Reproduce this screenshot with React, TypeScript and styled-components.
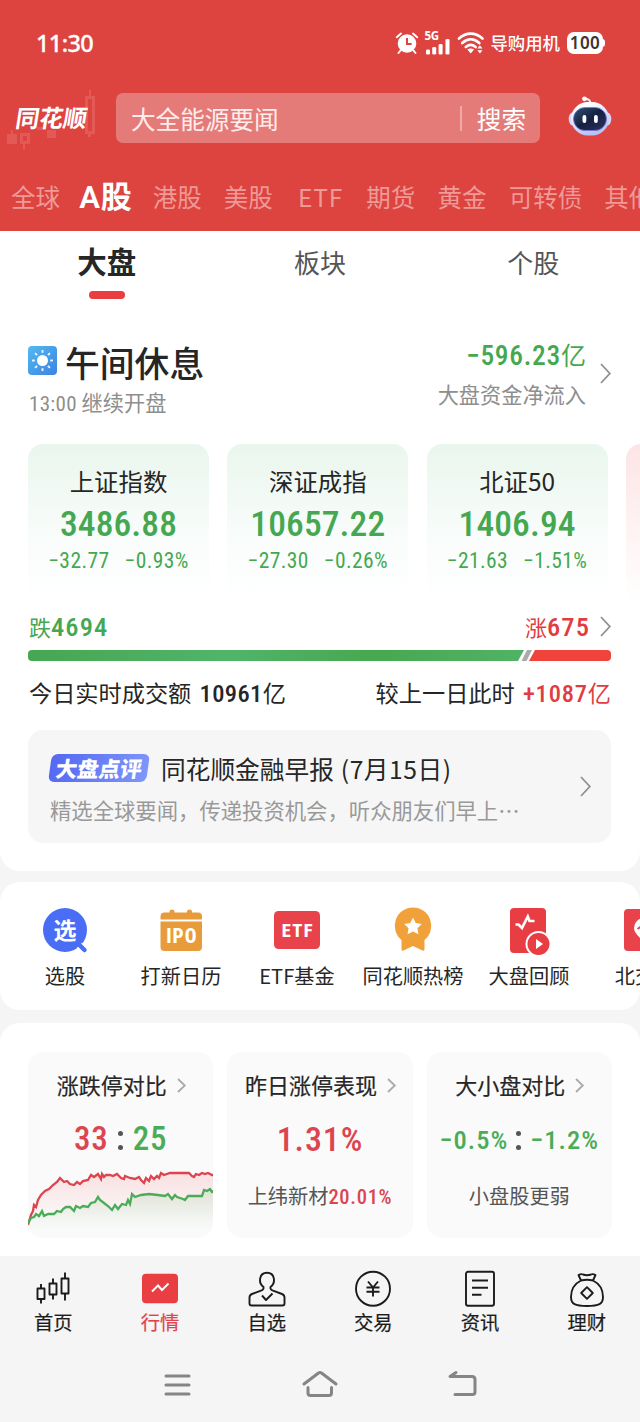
import React from "react";
import styled, { createGlobalStyle, css } from "styled-components";

const RED = "#e23c42";
const GREEN = "#45a851";
const INK = "#262626";

const GlobalStyle = createGlobalStyle`
  * { box-sizing: border-box; }
  body {
    margin: 0;
    background: #f5f5f5;
    font-family: "Noto Sans CJK SC", "Noto Sans", sans-serif;
    color: ${INK};
    overflow: hidden;
  }
  svg { display: block; flex: none; overflow: visible; }
`;

const Screen = styled.div`
  width: 640px;
  height: 1422px;
  overflow: hidden;
  display: flex;
  flex-direction: column;
  background: #f5f5f5;
  white-space: nowrap;
`;

const Num = styled.span<{ size: number; ls?: number; weight?: number; tone?: string; gap?: number }>`
  font-family: "Roboto Condensed", Roboto, "Noto Sans CJK SC", sans-serif;
  font-stretch: 75%;
  font-size: ${(p) => p.size}px;
  letter-spacing: ${(p) => p.ls ?? 0}px;
  font-weight: ${(p) => p.weight ?? 500};
  margin-left: ${(p) => p.gap ?? 0}px;
  ${(p) => p.tone && css`color: ${p.tone};`}
`;

const Header = styled.header`
  height: 231px;
  flex: none;
  background: #dd433f;
  color: #fff;
`;

const StatusBar = styled.div`
  height: 93px;
  padding: 0 37px 8px 36px;
  display: flex;
  align-items: center;
`;

const Clock = styled.div`
  flex: 1;
  font: 500 23.5px/30px "Noto Sans", sans-serif;
  letter-spacing: -0.6px;
  -webkit-text-stroke: 0.3px #fff;
`;

const StatusIcons = styled.div`
  display: flex;
  align-items: center;
`;

const Carrier = styled.span`
  font-size: 17.4px;
  line-height: 24px;
  margin: 0 7px 0 5px;
  font-weight: 500;
`;

const Battery = styled.div`
  width: 36px;
  height: 22px;
  border-radius: 7px;
  background: #fff;
  color: #44312f;
  font: 600 17px/22px "Noto Sans", sans-serif;
  letter-spacing: 0.4px;
  text-align: center;
  position: relative;
  &::after {
    content: "";
    position: absolute;
    right: -2px;
    top: 7px;
    width: 3px;
    height: 8px;
    border-radius: 0 3px 3px 0;
    background: #fff;
  }
`;

const SearchRow = styled.div`
  height: 50px;
  display: flex;
  align-items: center;
`;

const Logo = styled.div`
  width: 116px;
  height: 50px;
  padding-left: 16px;
  position: relative;
  svg { position: absolute; left: 4px; top: -3px; }
  span {
    position: relative;
    display: inline-block;
    font-size: 23.8px;
    font-weight: 700;
    line-height: 48px;
    transform: skewX(-9deg);
  }
`;

const SearchBox = styled.div`
  width: 424px;
  height: 50px;
  border-radius: 7px;
  background: #e57b79;
  display: flex;
  align-items: center;
  padding: 0 14px 0 15px;
  font-size: 24.6px;
  line-height: 48px;
`;

const Keyword = styled.span`
  flex: 1;
  color: #ffeceb;
`;

const Divider = styled.i`
  width: 2px;
  height: 25px;
  background: #f0a9a7;
  margin-right: 15px;
`;

const Robot = styled.svg`
  margin-left: 28px;
  margin-top: -3px;
`;

const MarketTabs = styled.nav`
  display: flex;
  align-items: center;
  height: 88px;
  padding: 20px 0 0 11px;
  gap: 22.2px;
  overflow: hidden;
`;

const MarketTab = styled.span<{ $active?: boolean; $latin?: boolean }>`
  flex: none;
  font-size: ${(p) => (p.$active ? 30.5 : 24.5)}px;
  font-weight: ${(p) => (p.$active ? 700 : 400)};
  color: ${(p) => (p.$active ? "#fff" : "#ee9a97")};
  line-height: 36px;
  ${(p) => p.$latin && css`letter-spacing: 0.8px; margin: 0 1px 0 3px;`}
  ${(p) => p.$active && css`
    font-family: Roboto, "Noto Sans CJK SC", sans-serif;
    font-weight: 600;
    font-size: 31px;
    letter-spacing: 0.8px;
    margin: 1px -2px 0 -3px;
  `}
`;

const Overview = styled.section`
  height: 640px;
  flex: none;
  background: #fff;
  border-radius: 0 0 20px 20px;
  padding: 0 29px 0 28px;
`;

const SubTabs = styled.nav`
  display: flex;
  height: 109px;
  margin: 0 -29px 0 -28px;
`;

const SubTab = styled.div<{ $active?: boolean }>`
  flex: 1;
  height: 68px;
  display: flex;
  flex-direction: column;
  align-items: center;
  padding-top: ${(p) => (p.$active ? 10 : 12)}px;
  font-size: ${(p) => (p.$active ? 29.5 : 26)}px;
  font-weight: ${(p) => (p.$active ? 700 : 400)};
  color: ${(p) => (p.$active ? INK : "#555")};
  line-height: 38px;
  &::after {
    content: "";
    width: 36px;
    height: 8px;
    margin-top: 12px;
    border-radius: 4px;
    background: ${(p) => (p.$active ? "#e93d40" : "transparent")};
  }
`;

const Session = styled.div`
  display: flex;
  align-items: center;
  height: 88px;
  margin: -11px 0 11px;
`;

const SessionState = styled.div`
  flex: 1;
  margin-top: 10px;
`;

const SessionTitle = styled.div`
  display: flex;
  align-items: center;
  gap: 8px;
  height: 49px;
  font-size: 34.8px;
  font-weight: 500;
  svg { margin-top: -4px; }
`;

const Muted = styled.div`
  font-size: 21.2px;
  line-height: 30px;
  height: 32px;
  color: #8e8e8e;
`;

const Flow = styled.div`
  text-align: right;
  margin-right: 14px;
`;

const FlowValue = styled.div`
  height: 43px;
  line-height: 36px;
  color: ${GREEN};
  font-size: 25px;
`;

const IndexRow = styled.div`
  display: flex;
  gap: 18.3px;
  height: 175px;
  padding-top: 16px;
  margin-right: -29px;
  overflow: hidden;
`;

const IndexCard = styled.article<{ $up?: boolean }>`
  flex: none;
  width: 181px;
  height: 159px;
  border-radius: 15px;
  background: linear-gradient(${(p) => (p.$up ? "#fde4e5, #fff" : "#e9f6ed, #f8fcfa 55%, #fff")});
  display: flex;
  flex-direction: column;
  align-items: center;
  padding-top: 20px;
`;

const IndexName = styled.div`
  font-size: 24.4px;
  line-height: 34px;
`;

const IndexValue = styled.div`
  height: 50px;
  line-height: 52px;
`;

const IndexDelta = styled.div`
  display: flex;
  gap: 15px;
  height: 26px;
  line-height: 26px;
`;

const Breadth = styled.div`
  display: flex;
  align-items: center;
  height: 47px;
  font-size: 22px;
  line-height: 32px;
`;

const Losers = styled.span`
  flex: 1;
  padding-left: 1px;
  color: ${GREEN};
`;

const Gainers = styled.span`
  color: ${RED};
  margin-right: 10px;
`;

const Turnover = styled.div`
  display: flex;
  justify-content: space-between;
  font-size: 23.2px;
  line-height: 36px;
  margin-top: 13px;
  padding-left: 1px;
  height: 56px;
`;

const NewsCard = styled.article`
  height: 113px;
  border-radius: 15px;
  background: #f6f6f6;
  display: flex;
  align-items: center;
  justify-content: space-between;
  padding: 0 20px 0 22px;
`;

const NewsTitle = styled.div`
  display: flex;
  align-items: center;
  gap: 13px;
  height: 40px;
  font-size: 24.7px;
  line-height: 36px;
  i { font-style: normal; margin-left: 7px; letter-spacing: 0.5px; }
`;

const Badge = styled.span`
  width: 98px;
  height: 28px;
  border-radius: 6px;
  background: linear-gradient(100deg, #5468f2, #7f96fa);
  transform: skewX(-8deg);
  color: #fff;
  font-size: 21.5px;
  font-weight: 900;
  line-height: 27px;
  text-align: center;
`;

const NewsText = styled.div`
  font-size: 21.35px;
  line-height: 32px;
  height: 38px;
  padding-top: 6px;
  color: #999;
`;

const Shortcuts = styled.section`
  margin-top: 11px;
  height: 128px;
  flex: none;
  background: #fff;
  border-radius: 20px;
  padding: 23px 0 0 7px;
  display: flex;
  overflow: hidden;
`;

const Shortcut = styled.div`
  flex: none;
  width: 116px;
  display: flex;
  flex-direction: column;
  align-items: center;
  font-size: 20.2px;
  line-height: 30px;
  svg { margin-bottom: 8px; }
`;

const Stats = styled.section`
  margin-top: 13px;
  height: 233px;
  flex: none;
  background: #fff;
  border-radius: 20px 20px 0 0;
  padding: 29px 28px 0;
  display: flex;
  gap: 14px;
`;

const Tile = styled.article`
  flex: 1;
  height: 186px;
  border-radius: 15px;
  background: #fafafa;
  display: flex;
  flex-direction: column;
  align-items: center;
  overflow: hidden;
`;

const TileTitle = styled.div`
  display: flex;
  align-items: center;
  gap: 10px;
  margin: 15px 0 0 1px;
  font-size: 22px;
  line-height: 34px;
  -webkit-text-stroke: 0.2px currentColor;
  svg { margin-top: 2px; }
`;

const TileValue = styled.div`
  display: flex;
  align-items: center;
  height: 40px;
  margin-top: 18px;
`;

const Colon = styled.i<{ $gap: number }>`
  width: 5px;
  height: 19px;
  margin: 3px ${(p) => p.$gap}px 0 ${(p) => p.$gap - 1}px;
  display: flex;
  flex-direction: column;
  justify-content: space-between;
  &::before, &::after {
    content: "";
    width: 5px;
    height: 5px;
    border-radius: 50%;
    background: #555;
  }
`;

const TileNote = styled.div`
  margin-top: 22px;
  font-size: 20.2px;
  line-height: 30px;
  color: #555;
`;

const TabBar = styled.nav`
  height: 90px;
  flex: none;
  display: flex;
  padding-top: 14px;
`;

const Tab = styled.div<{ $active?: boolean }>`
  flex: 1;
  display: flex;
  flex-direction: column;
  align-items: center;
  font-size: 19.3px;
  line-height: 28px;
  color: ${(p) => (p.$active ? "#e0444a" : "#1c1c1c")};
  -webkit-text-stroke: 0.2px currentColor;
`;

const SystemNav = styled.div`
  display: flex;
  justify-content: space-between;
  align-items: center;
  height: 76px;
  padding: 1px 163px 0;
`;

const Chevron = ({ w = 11, h = 21, color = "#909090" }) => (
  <svg width={w} height={h} viewBox={`0 0 ${w} ${h}`} fill="none" stroke={color} strokeWidth="1.8">
    <path d={`M1 1 L${w - 1.2} ${h / 2} L1 ${h - 1}`} />
  </svg>
);

const Alarm = () => (
  <svg width="24" height="24" viewBox="0 0 24 24">
    <circle cx="12" cy="12.5" r="9.3" fill="#fff" />
    <path d="M1.8 6.2 6 2.6M22.2 6.2 18 2.6M5.5 19.5 3.5 22M18.5 19.5 20.5 22" stroke="#fff" strokeWidth="2" strokeLinecap="round" />
    <path d="M12 7v6h4.6" fill="none" stroke="#dd433f" strokeWidth="2" />
  </svg>
);

const SignalWrap = styled.div`
  position: relative;
  width: 27px;
  height: 24px;
  margin: 0 6px 0 5px;
  span {
    position: absolute;
    left: 0;
    top: 0;
    font: 700 11.5px/10px "Noto Sans", sans-serif;
    letter-spacing: -0.2px;
  }
`;

const Signal = () => (
  <SignalWrap>
    <span>5G</span>
    <svg width="27" height="24" fill="#fff">
      <rect x="2" y="18.5" width="4" height="5" rx="1.3" />
      <rect x="8.2" y="16" width="4" height="7.5" rx="1.3" />
      <rect x="14.6" y="13" width="4" height="10.5" rx="1.3" />
      <rect x="21.5" y="8" width="4" height="15.5" rx="1.3" />
    </svg>
  </SignalWrap>
);

const Wifi = () => (
  <svg width="28" height="24" viewBox="0 0 28 24">
    <g fill="none" stroke="#fff" strokeWidth="2.7" strokeLinecap="round">
      <path d="M2 7.5C9 1 18.5 1 25.5 7.5" />
      <path d="M5.2 12C10.5 7 17 7 22.3 12" />
      <path d="M8.8 16C12 13.3 15.5 13.3 18.6 16" />
    </g>
    <path d="M10.3 18.5Q13.7 16.5 17.1 18.5L13.7 22.5Z" fill="#fff" />
    <path d="M20.3 17.6 22.9 14.2 25.5 17.6ZM20.3 19.2H25.5L22.9 22.6Z" fill="#fff" />
  </svg>
);

const LogoCandles = () => (
  <svg width="96" height="64" viewBox="0 0 96 64" fill="#e9706d" opacity="0.5">
    <path d="M3 44H7V40H9V44H13V54H3ZM33 37H42V40H33ZM43 40H52V48H43Z" />
    <path d="M16 43H26V54H21V60H19V54H16ZM19 46V51H23V46Z" fillRule="evenodd" />
    <path d="M81 6H91V44H87V47H84V44H81ZM84 9V41H88V9ZM85 0H87V6H85Z" fillRule="evenodd" />
  </svg>
);

const RobotHead = () => (
  <Robot width="44" height="42" viewBox="0 0 44 42">
    <defs>
      <linearGradient id="shell" x1="0" y1="0" x2="0.4" y2="1">
        <stop offset="0.2" stopColor="#fff" />
        <stop offset="1" stopColor="#b9c1fa" />
      </linearGradient>
      <linearGradient id="visor" x1="0" y1="0" x2="1" y2="1">
        <stop offset="0" stopColor="#315274" />
        <stop offset="0.5" stopColor="#142140" />
        <stop offset="1" stopColor="#303260" />
      </linearGradient>
    </defs>
    <path d="M17 3Q22.5 2.5 22.5 8" fill="none" stroke="#fbe9ef" strokeWidth="2" />
    <circle cx="16.5" cy="2.8" r="2.4" fill="#fff" />
    <ellipse cx="4.5" cy="23" rx="3.8" ry="6.5" fill="#d3d4fb" />
    <ellipse cx="39.5" cy="23" rx="3.8" ry="6.5" fill="#d3d4fb" />
    <rect x="3" y="6" width="38" height="33.5" rx="17" fill="url(#shell)" />
    <rect x="5.5" y="11.5" width="33" height="23" rx="11.5" fill="url(#visor)" stroke="#7777d8" strokeWidth="0.8" />
    <rect x="14.5" y="19" width="3.8" height="8" rx="1.9" fill="#fff" />
    <rect x="26" y="19" width="3.8" height="8" rx="1.9" fill="#fff" />
  </Robot>
);

const Sun = () => (
  <svg width="29" height="29" viewBox="0 0 29 29">
    <defs>
      <linearGradient id="sky" x1="0" y1="0" x2="1" y2="1">
        <stop offset="0" stopColor="#52baf0" />
        <stop offset="1" stopColor="#3c83e2" />
      </linearGradient>
    </defs>
    <rect width="29" height="29" rx="4" fill="url(#sky)" />
    <circle cx="14.5" cy="14.5" r="5.5" fill="#fff" />
    {[0, 45, 90, 135, 180, 225, 270, 315].map((a) => (
      <path key={a} d="M14.5 4V6.8" stroke="#e9f6ff" strokeWidth="1.9" transform={`rotate(${a} 14.5 14.5)`} />
    ))}
  </svg>
);

const BreadthBar = () => (
  <svg width="583" height="11" viewBox="0 0 583 11">
    <defs>
      <linearGradient id="fall">
        <stop offset="0" stopColor="#47a651" />
        <stop offset="0.4" stopColor="#50b46a" />
        <stop offset="0.7" stopColor="#48a850" />
        <stop offset="1" stopColor="#50b365" />
      </linearGradient>
    </defs>
    <path d="M4 0H496L490 11H4Q0 11 0 7V4Q0 0 4 0Z" fill="url(#fall)" />
    <path d="M499 0H504L498.5 11H493.5Z" fill="#aaa" />
    <path d="M507 0H579Q583 0 583 4V7Q583 11 579 11H501Z" fill="#ef433c" />
  </svg>
);

const glyphText = { fill: "#fff", textAnchor: "middle" as const };

const PickIcon = () => (
  <svg width="48" height="48" viewBox="0 0 48 48">
    <circle cx="24" cy="25" r="22" fill="#4a6df5" />
    <path d="M38 40 43 45" stroke="#fff" strokeWidth="8" />
    <path d="M38 39.5 43.5 45" stroke="#4a6df5" strokeWidth="4.5" strokeLinecap="round" />
    <path d="M30 45.5Q38 43 42 36L36 36Z" fill="#4a6df5" />
    <text x="24" y="34" fontSize="23" fontWeight={700} {...glyphText}>选</text>
  </svg>
);

const IpoIcon = () => (
  <svg width="48" height="48" viewBox="0 -2 48 48">
    <path d="M3.5 12.5V9.5Q3.5 5.500 7.5 5.500H12.5V4.500Q12.5 2.500 15 2.500T17.5 4.500V5.500H30V4.500Q30 2.500 32.5 2.500T35 4.500V5.500H41Q45 5.500 45 9.500V12.500Z" fill="#e79b3b" />
    <path d="M3.5 14.5H45V40Q45 44 41 44H7.5Q3.5 44 3.5 40Z" fill="#e79b3b" />
    <text x="24.8" y="36" fontSize="19.5" letterSpacing="1" fontFamily="Roboto Condensed" fontWeight={800} {...glyphText}>IPO</text>
  </svg>
);

const EtfIcon = () => (
  <svg width="48" height="48" viewBox="0 -2 48 48">
    <rect x="1" y="4" width="46" height="38" rx="4.5" fill="#e8434a" />
    <text x="24.8" y="29.5" fontSize="18.5" letterSpacing="1.3" fontFamily="Roboto Condensed" fontWeight={800} {...glyphText}>ETF</text>
  </svg>
);

const RankIcon = () => (
  <svg width="48" height="48" viewBox="0 -2 48 48" fill="#f0a139">
    <path d="M24 0.500A18.3 18.3 0 0 1 35.5 33V42Q35.5 44.500 33.500 43.500L24 39 14.5 43.500Q12.5 44.500 12.5 42V33A18.3 18.3 0 0 1 24 0.500Z" />
    <path d="M24 10.500 26.7 16.100 32.8 16.900 28.4 21.200 29.5 27.300 24 24.400 18.5 27.300 19.6 21.200 15.2 16.900 21.3 16.100Z" fill="#fff" />
  </svg>
);

const ReviewIcon = () => (
  <svg width="48" height="48" viewBox="0 -2 48 48">
    <rect x="5" y="1" width="36" height="45" rx="4" fill="#e73d43" />
    <path d="M10.5 17.500H13.5L17 21 22.8 9.500 24.5 14H29.5" fill="none" stroke="#fff" strokeWidth="2.7" />
    <circle cx="33.5" cy="37" r="13" fill="#fff" />
    <circle cx="33.5" cy="37" r="11" fill="#e73d43" />
    <path d="M31 32V42L38 37Z" fill="#fff" />
  </svg>
);

const BeijingIcon = () => (
  <svg width="44" height="48" viewBox="0 -1 44 48">
    <rect x="1" y="3" width="42" height="42" rx="4" fill="#e8434a" />
    <path d="M21 36C15 30 11 26.500 11 22A10 10 0 0 1 31 22C31 26.500 27 30 21 36Z" fill="#fff" />
    <path d="M14.5 23L18.5 20 21.5 22" stroke="#e8434a" strokeWidth="2" fill="none" />
  </svg>
);

const redLine =
  "0,52 3,42 5,38 6,32 8,34 10,27 13,22 17,18 21,16 25,12 29,9 32,5 36,9 39,8 42,11 46,12 49,9 52,11 55,8 60,7 63,2 66,4 70,1 73,6 74,1 76,4 78,2 82,2 85,3 89,1 93,5 96,6 97,3 102,5 107,6 111,4 113,7 116,10 118,5 121,8 123,3 126,6 129,3 131,5 133,0 136,2 142,0 161,0 164,3 166,4 168,1 171,2 174,0 177,1 180,0 184,2 186,2";
const greenLine =
  "0,50 3,45 6,44 8,41 11,43 14,38 16,43 20,41 26,41 29,38 33,39 35,36 38,34 42,34 46,38 48,33 52,35 55,33 60,34 63,30 67,29 70,24 72,27 76,30 80,33 84,37 87,32 90,36 94,31 98,32 100,27 102,31 104,21 107,24 113,22 121,21 130,22 137,23 140,21 144,26 147,22 149,24 155,26 157,27 160,23 170,23 174,23 176,17 179,18 182,16 184,19 186,18";

const Trend = styled.svg`
  margin-top: 13px;
`;

const TrendChart = () => (
  <Trend width="186" height="68" viewBox="0 0 186 68">
    <defs>
      <linearGradient id="redFade" x1="0" y1="0" x2="0" y2="1">
        <stop offset="0" stopColor="#f0434f" stopOpacity="0.14" />
        <stop offset="0.8" stopColor="#f0434f" stopOpacity="0" />
      </linearGradient>
      <linearGradient id="greenFade" x1="0" y1="0" x2="0" y2="1">
        <stop offset="0" stopColor="#4db35a" stopOpacity="0.14" />
        <stop offset="1" stopColor="#4db35a" stopOpacity="0" />
      </linearGradient>
    </defs>
    <g transform="translate(0 2)">
      <polygon points={`${redLine} 186,60 0,60`} fill="url(#redFade)" />
      <polygon points={`${greenLine} 186,60 0,60`} fill="url(#greenFade)" />
      <polyline points={redLine} fill="none" stroke="#dc4550" strokeWidth="2.3" />
      <polyline points={greenLine} fill="none" stroke="#4bac58" strokeWidth="2.3" />
    </g>
  </Trend>
);

const line = { fill: "none", stroke: "#1c1c1c", strokeWidth: 1.9, strokeLinejoin: "round" as const };

const HomeTabIcon = () => (
  <svg width="38" height="38" viewBox="0 0 38 38" {...line}>
    <path d="M3.5 18.5H10.5V29H3.5ZM7 14V18.5M7 29V33.5M15.5 13.5H22.5V24.5H15.5ZM19 8.5V13.5M19 24.5V29.5M27.5 8.5H34.5V23.5H27.5ZM31 2.5V8.5M31 23.5V30.5" />
  </svg>
);
const QuoteTabIcon = () => (
  <svg width="38" height="38" viewBox="0 0 38 38">
    <rect x="1" y="3.8" width="36" height="29.5" rx="4" fill="#e93f43" />
    <path d="M11 21.5 17 15.5 21 20 27.5 13.5" fill="none" stroke="#fff" strokeWidth="1.9" />
  </svg>
);
const WatchTabIcon = () => (
  <svg width="38" height="38" viewBox="0 0 38 38" {...line}>
    <path d="M15.5 18.5V17C10 13 11 2.8 19 2.8S28 13 22.5 17V18.5Q23 20 25 20.7L34 24Q36.5 25 36.5 27.5V33.5Q36.5 35.5 34.5 35.5H3.5Q1.5 35.5 1.5 33.5V27.5Q1.5 25 4 24L13 20.7Q15 20 15.5 18.5Z" />
    <path d="M14 25.5 18 30 24.5 23.5" />
  </svg>
);
const TradeTabIcon = () => (
  <svg width="38" height="38" viewBox="0 0 38 38" {...line}>
    <circle cx="19" cy="18.7" r="17" />
    <path d="M14 11.5 19 17.5 24 11.5M19 17.5V26.5M12.5 17.5H25.5M12.5 21.7H25.5" />
  </svg>
);
const NewsTabIcon = () => (
  <svg width="38" height="38" viewBox="0 0 38 38" {...line}>
    <rect x="5" y="1.8" width="28" height="34" rx="2" />
    <path d="M11 10.5H27M11 17.7H27M11 24.7H20.5" />
  </svg>
);
const WealthTabIcon = () => (
  <svg width="38" height="38" viewBox="0 0 38 38" {...line}>
    <path d="M13 10.5 10.5 5Q13 3.5 15 4.5Q19 6 23 4.5Q25 3.5 27.5 5L25 10.5Q19 9 13 10.5C6 14 3 20.5 3 27C3 34 7 36 19 36S35 34 35 27C35 20.5 32 14 25 10.5" />
    <path d="M19 17.2 24.8 23 19 28.8 13.2 23Z" />
  </svg>
);

const sys = { fill: "none", stroke: "#858585", strokeWidth: 3, strokeLinecap: "round" as const, strokeLinejoin: "round" as const };

const indices = [
  { name: "上证指数", value: "3486.88", change: "−32.77", pct: "−0.93%" },
  { name: "深证成指", value: "10657.22", change: "−27.30", pct: "−0.26%" },
  { name: "北证50", value: "1406.94", change: "−21.63", pct: "−1.51%" },
];

const markets = ["全球", "A股", "港股", "美股", "ETF", "期货", "黄金", "可转债", "其他"];

const shortcuts = [
  { label: "选股", Icon: PickIcon },
  { label: "打新日历", Icon: IpoIcon },
  { label: "ETF基金", Icon: EtfIcon },
  { label: "同花顺热榜", Icon: RankIcon },
  { label: "大盘回顾", Icon: ReviewIcon },
  { label: "北交所", Icon: BeijingIcon },
];

const tabs = [
  { label: "首页", Icon: HomeTabIcon },
  { label: "行情", Icon: QuoteTabIcon },
  { label: "自选", Icon: WatchTabIcon },
  { label: "交易", Icon: TradeTabIcon },
  { label: "资讯", Icon: NewsTabIcon },
  { label: "理财", Icon: WealthTabIcon },
];

export default function App() {
  return (
    <>
      <GlobalStyle />
      <Screen>
        <Header>
          <StatusBar>
            <Clock>11:30</Clock>
            <StatusIcons>
              <Alarm />
              <Signal />
              <Wifi />
              <Carrier>导购用机</Carrier>
              <Battery>100</Battery>
            </StatusIcons>
          </StatusBar>
          <SearchRow>
            <Logo>
              <LogoCandles />
              <span>同花顺</span>
            </Logo>
            <SearchBox>
              <Keyword>大全能源要闻</Keyword>
              <Divider />
              <span>搜索</span>
            </SearchBox>
            <RobotHead />
          </SearchRow>
          <MarketTabs>
            {markets.map((m) => (
              <MarketTab key={m} $active={m === "A股"} $latin={m === "ETF"}>{m}</MarketTab>
            ))}
          </MarketTabs>
        </Header>

        <Overview>
          <SubTabs>
            <SubTab $active>大盘</SubTab>
            <SubTab>板块</SubTab>
            <SubTab>个股</SubTab>
          </SubTabs>
          <Session>
            <SessionState>
              <SessionTitle><Sun />午间休息</SessionTitle>
              <Muted><Num size={21} ls={0.3} weight={400} gap={1}>13:00</Num> 继续开盘</Muted>
            </SessionState>
            <Flow>
              <FlowValue><Num size={27.5} ls={0.7}>−596.23</Num>亿</FlowValue>
              <Muted>大盘资金净流入</Muted>
            </Flow>
            <Chevron />
          </Session>
          <IndexRow>
            {indices.map((x) => (
              <IndexCard key={x.name}>
                <IndexName>{x.name}</IndexName>
                <IndexValue><Num size={35.5} ls={0.1} tone={GREEN}>{x.value}</Num></IndexValue>
                <IndexDelta>
                  <Num size={21.5} ls={0.4} weight={400} tone={GREEN}>{x.change}</Num>
                  <Num size={21.5} ls={0.4} weight={400} tone={GREEN}>{x.pct}</Num>
                </IndexDelta>
              </IndexCard>
            ))}
            <IndexCard $up />
          </IndexRow>
          <Breadth>
            <Losers>跌<Num size={26.5} ls={1.1}>4694</Num></Losers>
            <Gainers>涨<Num size={26.5} ls={1.1}>675</Num></Gainers>
            <Chevron />
          </Breadth>
          <BreadthBar />
          <Turnover>
            <span>今日实时成交额 <Num size={24.5} ls={0.4} gap={3}>10961</Num>亿</span>
            <span>较上一日此时 <Num size={24.5} ls={0.8} gap={3} tone={RED}>+1087</Num><Num size={23.2} weight={400} tone={RED}>亿</Num></span>
          </Turnover>
          <NewsCard>
            <div>
              <NewsTitle>
                <Badge>大盘点评</Badge>
                <span>同花顺金融早报<i>(7月15日)</i></span>
              </NewsTitle>
              <NewsText>精选全球要闻，传递投资机会，听众朋友们早上…</NewsText>
            </div>
            <Chevron />
          </NewsCard>
        </Overview>

        <Shortcuts>
          {shortcuts.map(({ label, Icon }) => (
            <Shortcut key={label}><Icon />{label}</Shortcut>
          ))}
        </Shortcuts>

        <Stats>
          <Tile>
            <TileTitle>涨跌停对比<Chevron w={9} h={15} color="#aaa" /></TileTitle>
            <TileValue>
              <Num size={33} ls={0.8} tone="#dc4550">33</Num>
              <Colon $gap={10} />
              <Num size={33} ls={0.8} tone="#4bac58">25</Num>
            </TileValue>
            <TrendChart />
          </Tile>
          <Tile>
            <TileTitle>昨日涨停表现<Chevron w={9} h={15} color="#aaa" /></TileTitle>
            <TileValue><Num size={34} ls={0.9} tone="#dc4550">1.31%</Num></TileValue>
            <TileNote>上纬新材<Num size={20.5} ls={0.7} tone="#dc4550">20.01%</Num></TileNote>
          </Tile>
          <Tile>
            <TileTitle>大小盘对比<Chevron w={9} h={15} color="#aaa" /></TileTitle>
            <TileValue>
              <Num size={26.5} ls={1} tone="#4bac58">−0.5%</Num>
              <Colon $gap={9} />
              <Num size={26.5} ls={1} tone="#4bac58">−1.2%</Num>
            </TileValue>
            <TileNote>小盘股更弱</TileNote>
          </Tile>
        </Stats>

        <TabBar>
          {tabs.map(({ label, Icon }) => (
            <Tab key={label} $active={label === "行情"}><Icon />{label}</Tab>
          ))}
        </TabBar>
        <SystemNav>
          <svg width="30" height="26" viewBox="0 0 30 26" {...sys}><path d="M3 4H26M3 13H26M3 22H26" /></svg>
          <svg width="36" height="30" viewBox="0 0 36 30" {...sys}><path d="M2 14 16.5 3Q18 2 19.5 3L34 14M6 17.5V23Q6 25.5 8.5 25.5H27Q29.5 25.5 29.5 23V17.5" /></svg>
          <svg width="30" height="28" viewBox="0 0 30 28" {...sys}><path d="M9 1.5 3 5.5H25Q28 5.5 28 8.5V21Q28 23.5 25.5 23.5H8" /></svg>
        </SystemNav>
      </Screen>
    </>
  );
}
